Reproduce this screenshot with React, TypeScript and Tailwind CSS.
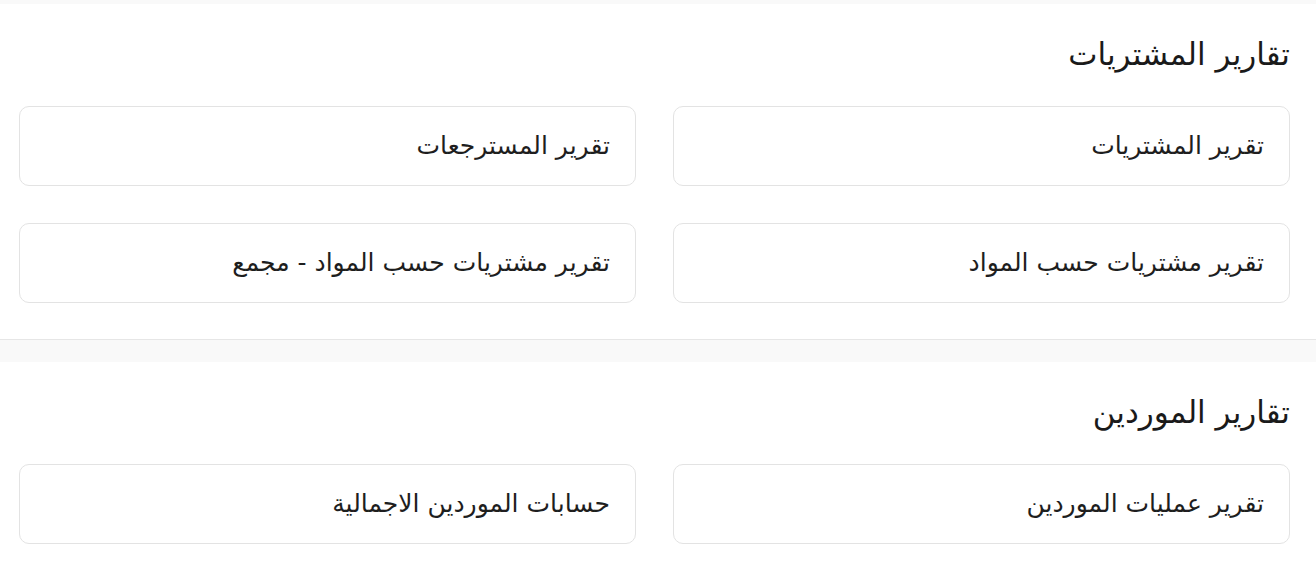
const sections = [
  {
    title: 'تقارير المشتريات',
    items: [
      'تقرير المشتريات',
      'تقرير المسترجعات',
      'تقرير مشتريات حسب المواد',
      'تقرير مشتريات حسب المواد - مجمع',
    ],
  },
  {
    title: 'تقارير الموردين',
    items: ['تقرير عمليات الموردين', 'حسابات الموردين الاجمالية'],
  },
]

function ReportCard({ label }: { label: string }) {
  return (
    <a
      href="#"
      className="flex h-[80px] items-center rounded-[10px] border border-[#e3e3e3] bg-white pr-[25px] text-[25px] text-[#1e1e1e]"
    >
      {label}
    </a>
  )
}

export default function App() {
  return (
    <div
      dir="rtl"
      className="min-h-screen bg-[#f9f9f9] pt-[4px]"
      style={{ fontFamily: '"DejaVu Sans", "Noto Sans", sans-serif' }}
    >
      {sections.map((section, i) => (
        <section
          key={section.title}
          className={`border-b border-[#e6e6e6] bg-white pt-[30px] pb-[36px] pr-[26px] pl-[19px] ${i > 0 ? 'mt-[22px]' : ''}`}
        >
          <h2 className="mb-[32px] text-[31px] leading-[40px] text-[#1a1a1a]">
            {section.title}
          </h2>
          <div className="grid grid-cols-2 gap-[37px]">
            {section.items.map((item) => (
              <ReportCard key={item} label={item} />
            ))}
          </div>
        </section>
      ))}
    </div>
  )
}
